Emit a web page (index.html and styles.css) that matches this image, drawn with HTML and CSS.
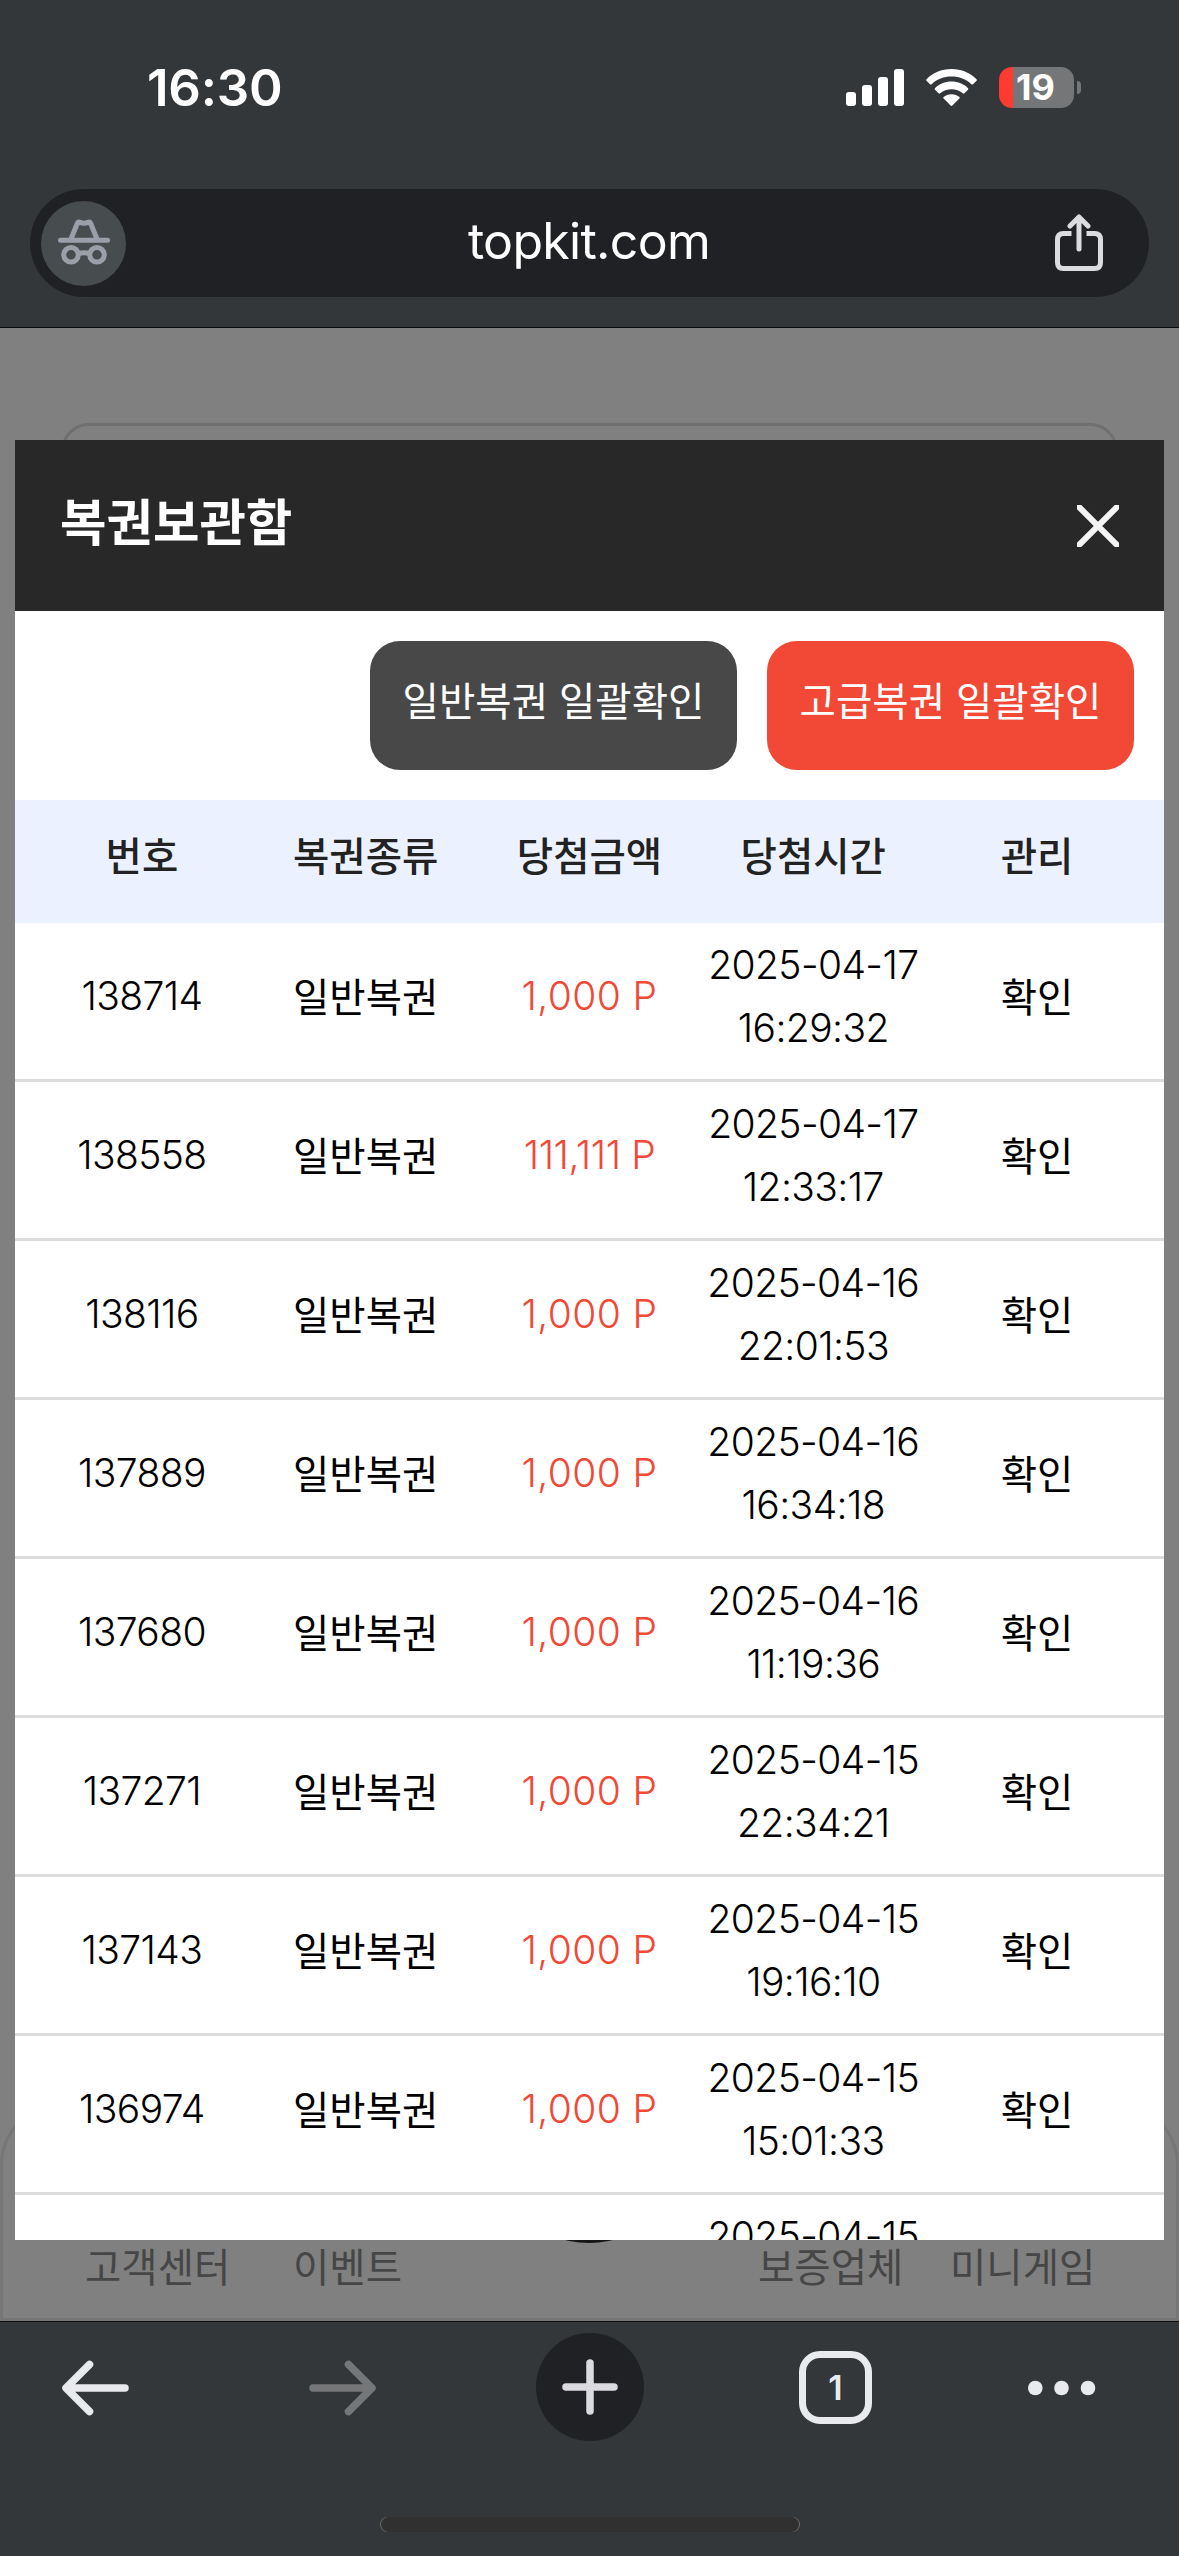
FILE: index.html
```
<!DOCTYPE html>
<html lang="ko">
<head>
    <meta charset="UTF-8">
    <title>복권보관함</title>
    <link rel="stylesheet" href="styles.css">
</head>
<body>
    <!-- Phone status bar and address bar -->
    <header class="browser-top">
        <div class="status-bar">
            <span class="time">16:30</span>
            <div class="status-icons">
                <svg class="signal" width="58" height="38" viewBox="0 0 58 38" fill="#fff">
                    <rect x="0" y="23" width="10" height="14" rx="3"/>
                    <rect x="16" y="16" width="10" height="21" rx="3"/>
                    <rect x="32" y="8" width="10" height="29" rx="3"/>
                    <rect x="48" y="0" width="10" height="37" rx="3"/>
                </svg>
                <svg class="wifi" width="51" height="38" viewBox="0 0 51 38" fill="#fff">
                    <path d="M25.500 0C35.500 0 44.500 3.800 50.500 10.200Q51.300 11 50.500 11.800L47 15.200Q46.200 16 45.300 15.200C40 10.200 33.200 7.600 25.500 7.600S11 10.200 5.700 15.200Q4.800 16 4 15.200L0.500 11.800Q-.3 11 .5 10.200C6.500 3.800 15.500 0 25.500 0Z"/>
                    <path d="M25.500 12.600C32 12.600 37.800 15 42 19.200Q42.800 20 42 20.800L38.400 24.300Q37.600 25 36.800 24.300C33.600 21.600 29.800 20.200 25.500 20.200S17.400 21.600 14.200 24.300Q13.400 25 12.600 24.300L9 20.800Q8.200 20 9 19.200C13.200 15 19 12.600 25.500 12.600Z"/>
                    <path d="M25.500 25.200C28.700 25.200 31.500 26.300 33.400 28Q34.200 28.800 33.400 29.600L26.400 36.600Q25.500 37.400 24.600 36.600L17.600 29.600Q16.800 28.800 17.600 28C19.500 26.300 22.300 25.200 25.500 25.200Z"/>
                </svg>
                <div class="battery"><span>19</span></div>
                <div class="battery-cap"></div>
            </div>
        </div>
        <div class="address-bar">
            <div class="incognito">
                <svg width="52" height="52" viewBox="0 0 52 52" fill="none" stroke="#9aa0aa" stroke-width="5" stroke-linecap="round" stroke-linejoin="round">
                    <path d="M2.500 23.200H49.500"/>
                    <path d="M13 22L19.300 6.500Q20 4.700 22 5.200Q26 7.400 30 5.200Q32 4.700 32.700 6.500L39 22"/>
                    <circle cx="13" cy="37.800" r="7.300"/>
                    <circle cx="39" cy="37.800" r="7.300"/>
                    <path d="M20.500 36.500Q26 35 31.500 36.500"/>
                </svg>
            </div>
            <span class="url">topkit.com</span>
            <svg class="share" width="48" height="58" viewBox="0 0 48 58" fill="none" stroke="#dadce0" stroke-width="5" stroke-linecap="round" stroke-linejoin="round">
                <path d="M16.500 19.500H8.500Q2.500 19.500 2.500 25.500V48.500Q2.500 54.500 8.500 54.500H39.500Q45.500 54.500 45.500 48.500V25.500Q45.500 19.500 39.500 19.500H31.500" stroke-linecap="butt"/>
                <path d="M24 35V4M15 12L24 3L33 12"/>
            </svg>
        </div>
    </header>

    <main class="page">
        <div class="page-box"></div>
        <!-- Site bottom navigation, behind the popup -->
        <nav class="site-nav">
            <span>고객센터</span>
            <span>이벤트</span>
            <i class="nav-home"></i>
            <span>보증업체</span>
            <span>미니게임</span>
        </nav>

        <!-- Lottery box popup -->
        <section class="popup">
            <div class="popup-header">
                <h1>복권보관함</h1>
                <svg width="42" height="42" viewBox="0 0 42 42" stroke="#f4f4f4" stroke-width="6">
                    <path d="M0 0L42 42M42 0L0 42"/>
                </svg>
            </div>
            <div class="popup-buttons">
                <button type="button" class="btn btn-dark">일반복권 일괄확인</button>
                <button type="button" class="btn btn-red">고급복권 일괄확인</button>
            </div>
            <div class="row row-head">
                <span>번호</span><span>복권종류</span><span>당첨금액</span><span>당첨시간</span><span>관리</span>
            </div>
            <div class="row">
                <span class="no">138714</span><span>일반복권</span><span class="point">1,000 P</span><span class="date">2025-04-17<br>16:29:32</span><span>확인</span>
            </div>
            <div class="row">
                <span class="no">138558</span><span>일반복권</span><span class="point point-long">111,111 P</span><span class="date">2025-04-17<br>12:33:17</span><span>확인</span>
            </div>
            <div class="row">
                <span class="no">138116</span><span>일반복권</span><span class="point">1,000 P</span><span class="date">2025-04-16<br>22:01:53</span><span>확인</span>
            </div>
            <div class="row">
                <span class="no">137889</span><span>일반복권</span><span class="point">1,000 P</span><span class="date">2025-04-16<br>16:34:18</span><span>확인</span>
            </div>
            <div class="row">
                <span class="no">137680</span><span>일반복권</span><span class="point">1,000 P</span><span class="date">2025-04-16<br>11:19:36</span><span>확인</span>
            </div>
            <div class="row">
                <span class="no">137271</span><span>일반복권</span><span class="point">1,000 P</span><span class="date">2025-04-15<br>22:34:21</span><span>확인</span>
            </div>
            <div class="row">
                <span class="no">137143</span><span>일반복권</span><span class="point">1,000 P</span><span class="date">2025-04-15<br>19:16:10</span><span>확인</span>
            </div>
            <div class="row">
                <span class="no">136974</span><span>일반복권</span><span class="point">1,000 P</span><span class="date">2025-04-15<br>15:01:33</span><span>확인</span>
            </div>
            <div class="row row-cut">
                <span></span><span></span><span></span><span class="date">2025-04-15</span><span></span>
            </div>
        </section>
    </main>

    <!-- Browser toolbar -->
    <footer class="toolbar">
        <div class="tools">
            <svg width="67" height="56" viewBox="0 0 67 56" fill="none" stroke="#e8eaed" stroke-width="7.500" stroke-linecap="round" stroke-linejoin="round">
                <path d="M63 28H5M27.500 4.500L4 28L27.500 51.500"/>
            </svg>
            <svg width="67" height="56" viewBox="0 0 67 56" fill="none" stroke="#757678" stroke-width="7.500" stroke-linecap="round" stroke-linejoin="round">
                <path d="M4 28H62M39.500 4.500L63 28L39.500 51.500"/>
            </svg>
            <div class="new-tab">
                <svg width="56" height="56" viewBox="0 0 56 56" stroke="#dadae0" stroke-width="7.500" stroke-linecap="round">
                    <path d="M28 4V52M4 28H52"/>
                </svg>
            </div>
            <div class="tab-count">1</div>
            <svg width="68" height="16" viewBox="0 0 68 16" fill="#e8eaed">
                <circle cx="7.300" cy="8" r="7.300"/>
                <circle cx="33.500" cy="8" r="7.300"/>
                <circle cx="60" cy="8" r="7.300"/>
            </svg>
        </div>
        <div class="home-indicator"></div>
    </footer>
</body>
</html>
```
FILE: styles.css
```
* {
    box-sizing: border-box;
}
body {
    margin: 0;
    width: 1179px;
    height: 2556px;
    overflow: hidden;
    display: flex;
    flex-direction: column;
    background: #808080;
    font-family: "Noto Sans CJK KR", sans-serif;
}
svg {
    display: block;
    flex: none;
}

/* Status bar and address bar */
.browser-top {
    height: 328px;
    padding: 0 30px;
    background: #34373a;
    border-bottom: 1px solid #0b0c0d;
}
.status-bar {
    height: 189px;
    padding: 0 68px 0 117px;
    display: flex;
    justify-content: space-between;
    font-family: "Inter", sans-serif;
    color: #fff;
}
.time {
    margin-top: 57px;
    font-size: 51px;
    line-height: 62px;
    font-weight: 600;
    letter-spacing: -0.2px;
}
.status-icons {
    display: flex;
    margin-top: 67px;
    height: 41px;
    align-items: center;
}
.wifi {
    margin: 0 22px;
}
.battery {
    width: 75px;
    height: 41px;
    padding-right: 2px;
    border-radius: 13px;
    background: linear-gradient(to right, #ff3b30 14px, #757678 14px);
    font-size: 36px;
    line-height: 41px;
    font-weight: 700;
    text-align: center;
}
.battery-cap {
    width: 4px;
    height: 13px;
    margin-left: 3px;
    border-radius: 0 4px 4px 0;
    background: #757678;
}
.address-bar {
    height: 108px;
    padding: 0 46px 0 11px;
    border-radius: 54px;
    background: #202124;
    display: flex;
    align-items: center;
    justify-content: space-between;
}
.incognito {
    width: 85px;
    height: 85px;
    border-radius: 50%;
    background: #474c4f;
    display: flex;
    align-items: center;
    justify-content: center;
}
.url {
    margin: 0 3px 4px 0;
    font-family: "Inter", sans-serif;
    font-size: 50px;
    line-height: 60px;
    letter-spacing: -0.7px;
    color: #fff;
}

/* Page behind the popup */
.page {
    position: relative;
    height: 1993px;
    overflow: hidden;
    display: flex;
    flex-direction: column;
    justify-content: space-between;
}
.page-box {
    height: 300px;
    margin: 95px 61px 0;
    border: 3px solid #6f6f6f;
    border-radius: 28px;
}
.site-nav {
    height: 217px;
    padding: 108px 89px 0 82px;
    border: 3px solid #767676;
    border-radius: 61px 61px 0 0;
    display: grid;
    grid-template-columns: 208px 106px 359px 192px auto;
    font-size: 39.5px;
    line-height: 100px;
    color: #464646;
    white-space: nowrap;
}
.nav-home {
    width: 200px;
    height: 200px;
    margin: -172px 0 0 90px;
    border-radius: 50%;
    background: #151618;
}

/* Popup */
.popup {
    position: absolute;
    top: 112px;
    left: 15px;
    width: 1149px;
    height: 1800px;
    overflow: hidden;
    background: #fff;
}
.popup-header {
    height: 171px;
    padding: 0 45px 0 45px;
    background: #282828;
    display: flex;
    align-items: center;
    justify-content: space-between;
}
.popup-header h1 {
    margin: 0 0 14px;
    font-size: 50.5px;
    line-height: 60px;
    color: #fff;
}
.popup-buttons {
    height: 189px;
    padding: 30px;
    display: flex;
    justify-content: flex-end;
    gap: 30px;
}
.btn {
    width: 367px;
    height: 129px;
    padding: 0 0 15px;
    border: none;
    border-radius: 30px;
    color: #fff;
    font-family: inherit;
    font-size: 39.5px;
}
.btn-dark {
    background: #484848;
}
.btn-red {
    background: #f24836;
}
.row {
    height: 159px;
    padding: 0 15px;
    border-bottom: 3px solid #dcdcdc;
    display: grid;
    grid-template-columns: repeat(5, 1fr);
    align-items: center;
    text-align: center;
    font-size: 39.5px;
    line-height: 63px;
    color: #000;
}
.row span {
    padding-bottom: 14px;
}
.row-head {
    height: 123px;
    border: none;
    background: #ebf1fe;
    font-weight: 500;
    color: #222;
}
.row-head span {
    padding-bottom: 17px;
}
.row .no,
.row .point,
.row .date {
    font-family: "Inter", sans-serif;
    font-size: 39px;
    font-weight: 350;
    letter-spacing: -0.6px;
    padding-bottom: 12px;
}
.row .date {
    padding-bottom: 11px;
}
.row .point {
    letter-spacing: 0.4px;
    color: #f24836;
}
.row .point-long {
    letter-spacing: -0.4px;
}
/* Last row runs past the popup's bottom edge */
.row-cut {
    align-items: start;
    padding-top: 9px;
}

/* Browser toolbar */
.toolbar {
    height: 235px;
    background: #34373a;
    border-top: 1px solid #0b0c0d;
    display: flex;
    flex-direction: column;
    align-items: center;
}
.tools {
    width: 1179px;
    height: 131px;
    padding-left: 62px;
    display: grid;
    grid-template-columns: 247px 227px 263px 229px auto;
    align-items: center;
}
.new-tab {
    width: 108px;
    height: 108px;
    margin-top: -1px;
    border-radius: 50%;
    background: #202124;
    display: flex;
    align-items: center;
    justify-content: center;
}
.tab-count {
    width: 73px;
    height: 73px;
    border: 7px solid #e8eaed;
    border-radius: 21px;
    font-family: "Inter", sans-serif;
    font-size: 34px;
    line-height: 60px;
    font-weight: 600;
    text-align: center;
    color: #e8eaed;
}
.home-indicator {
    width: 420px;
    height: 15px;
    margin-top: 64px;
    border-radius: 8px;
    background: #303030;
    box-shadow: inset 1px 0 0 #6b6d6e, inset -1px 0 0 #6b6d6e;
}
```
